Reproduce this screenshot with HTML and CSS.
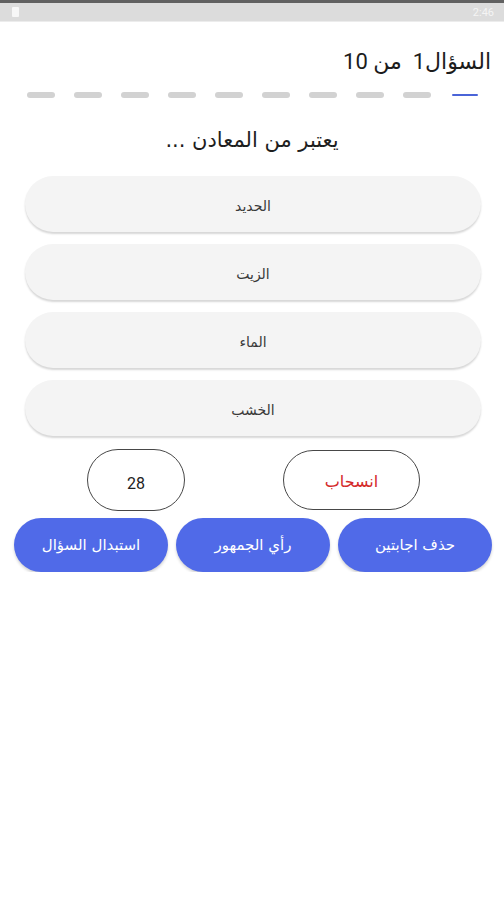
FILE: index.html
```html
<!DOCTYPE html>
<html lang="ar" dir="rtl">
<head>
  <meta charset="UTF-8" />
  <meta name="viewport" content="width=device-width, initial-scale=1.0"/>
  <title>Quiz</title>
  <link rel="stylesheet" href="styles.css">
</head>
<body>

<div class="status-bar">
  <span class="status-time">2:46</span>
  <span class="status-icon"></span>
</div>

<main class="quiz">
  <h1 class="quiz-count">السؤال1&nbsp;&nbsp;من 10</h1>

  <div class="progress">
    <span class="dash current"></span>
    <span class="dash"></span>
    <span class="dash"></span>
    <span class="dash"></span>
    <span class="dash"></span>
    <span class="dash"></span>
    <span class="dash"></span>
    <span class="dash"></span>
    <span class="dash"></span>
    <span class="dash"></span>
  </div>

  <h2 class="question">يعتبر من المعادن ...</h2>

  <div class="answers">
    <button class="answer">الحديد</button>
    <button class="answer">الزيت</button>
    <button class="answer">الماء</button>
    <button class="answer">الخشب</button>
  </div>

  <div class="controls">
    <button class="pill withdraw">انسحاب</button>
    <span class="pill timer">28</span>
  </div>

  <div class="helpers">
    <button class="helper">حذف اجابتين</button>
    <button class="helper">رأي الجمهور</button>
    <button class="helper">استبدال السؤال</button>
  </div>
</main>

</body>
</html>
```

FILE: styles.css
```css
body {
  margin: 0;
  background: #fff;
  color: #222;
  font-family: 'DejaVu Sans', sans-serif;
}

.status-bar {
  height: 18px;
  border-top: 3px solid #616161;
  background: #dcdcdc;
  display: flex;
  align-items: center;
  justify-content: space-between;
  padding: 0 10px 0 12px;
  border-bottom: 1px solid #ececec;
}

.status-icon {
  width: 7px;
  height: 10px;
  background: #f7f7f7;
  border-radius: 1px;
}

.status-time {
  font-family: 'Roboto', sans-serif;
  font-size: 11px;
  color: #f4f4f4;
}

.quiz-count {
  margin: 23px 13px 0 0;
  font-family: 'Roboto', 'DejaVu Sans', sans-serif;
  font-weight: 400;
  font-size: 22px;
  line-height: 34px;
  color: #1c1c1c;
}

.progress {
  display: flex;
  align-items: center;
  gap: 19px;
  padding: 0 26px;
  margin-top: 12px;
  height: 8px;
}

.dash {
  width: 28px;
  height: 6px;
  border-radius: 3px;
  background: #d2d2d2;
}

.dash.current {
  width: 26px;
  height: 2px;
  margin-left: 2px;
  background: #4a64d8;
  border-radius: 1px;
}

.question {
  margin: 25px 0 0;
  text-align: center;
  font-weight: 400;
  font-size: 21px;
  line-height: 32px;
  color: #1e1e1e;
}

.answers {
  display: flex;
  flex-direction: column;
  gap: 12px;
  margin: 20px 23px 0 25px;
}

.answer {
  height: 56px;
  padding-top: 5px;
  border: none;
  border-radius: 28px;
  background: #f4f4f4;
  box-shadow: 0 2px 2px rgba(0, 0, 0, 0.16);
  font-family: 'DejaVu Sans', sans-serif;
  font-size: 14px;
  color: #3a3a3a;
}

.controls {
  display: flex;
  align-items: center;
  gap: 98px;
  margin: 13px 84px 0 0;
}

.pill {
  display: flex;
  align-items: center;
  justify-content: center;
  box-sizing: border-box;
  border: 1.5px solid #474747;
  border-radius: 31px;
  background: #fff;
}

.withdraw {
  width: 137px;
  height: 60px;
  padding-top: 4px;
  font-family: 'DejaVu Sans', sans-serif;
  font-size: 16px;
  color: #d42a2a;
}

.timer {
  width: 98px;
  height: 62px;
  padding-top: 7px;
  font-family: 'Roboto', sans-serif;
  font-weight: 400;
  font-size: 16px;
  color: #222;
}

.helpers {
  display: flex;
  gap: 8px;
  margin: 7px 12px 0 14px;
}

.helper {
  width: 154px;
  height: 54px;
  border: none;
  border-radius: 27px;
  background: #506ae8;
  box-shadow: 0 2px 3px rgba(0, 0, 0, 0.18);
  font-family: 'DejaVu Sans', sans-serif;
  font-size: 15px;
  color: #fff;
}
```
